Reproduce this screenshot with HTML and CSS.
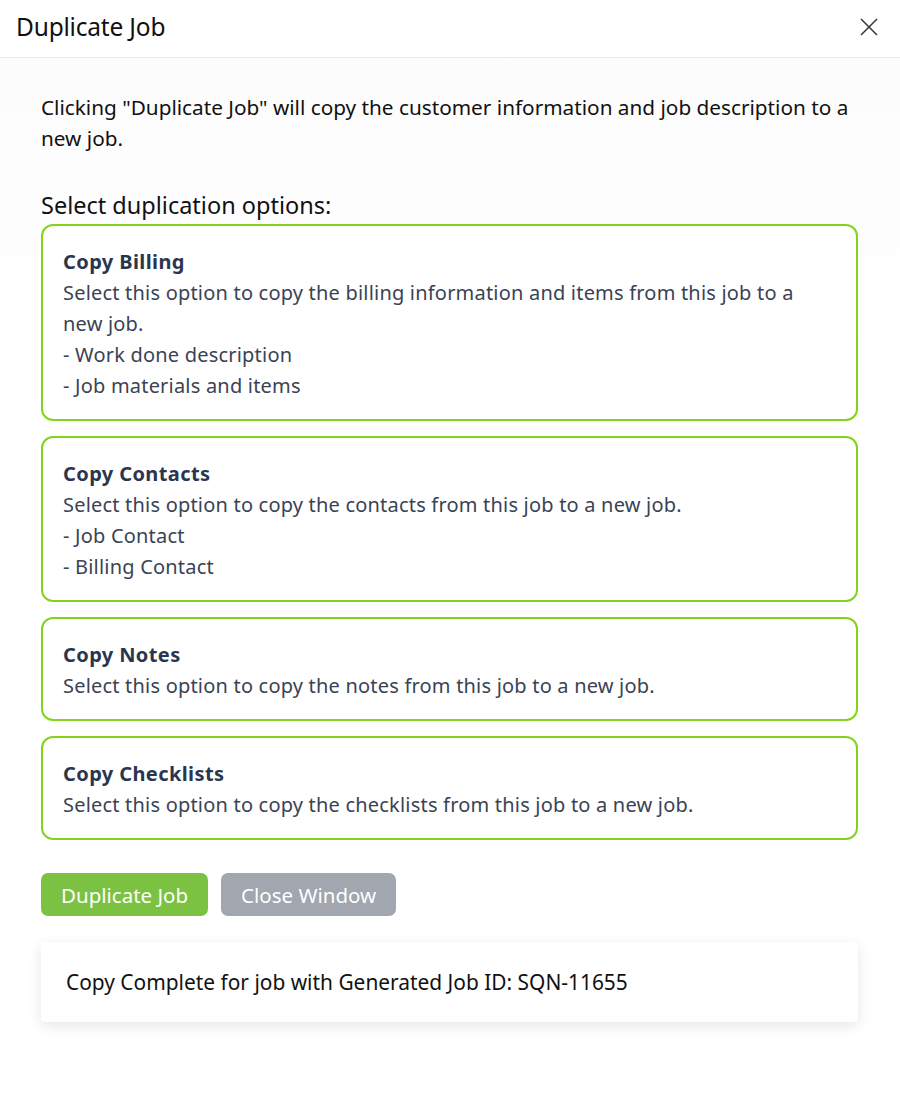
FILE: index.html
```html
<!DOCTYPE html>
<html lang="en">
<head>
    <title>Duplicate Job</title>
    <meta charset="UTF-8">
    <meta name="viewport" content="width=device-width, initial-scale=1.0">
    <link rel="stylesheet" href="styles.css">
</head>
<body>
    <div class="modal">
        <div class="modal-header">
            <h1>Duplicate Job</h1>
            <button class="close-btn" aria-label="Close">
                <svg viewBox="0 0 18 18" xmlns="http://www.w3.org/2000/svg">
                    <path d="M1 1L17 17M17 1L1 17"></path>
                </svg>
            </button>
        </div>

        <div class="modal-body">
            <p class="intro">Clicking "Duplicate Job" will copy the customer information and job description to a new job.</p>

            <div class="options-label">Select duplication options:</div>

            <div class="options">
                <div class="option-card">
                    <div class="option-title">Copy Billing</div>
                    <div class="option-text">Select this option to copy the billing information and items from this job to a new job.</div>
                    <div class="option-text">- Work done description</div>
                    <div class="option-text">- Job materials and items</div>
                </div>
                <div class="option-card">
                    <div class="option-title">Copy Contacts</div>
                    <div class="option-text">Select this option to copy the contacts from this job to a new job.</div>
                    <div class="option-text">- Job Contact</div>
                    <div class="option-text">- Billing Contact</div>
                </div>
                <div class="option-card">
                    <div class="option-title">Copy Notes</div>
                    <div class="option-text">Select this option to copy the notes from this job to a new job.</div>
                </div>
                <div class="option-card">
                    <div class="option-title">Copy Checklists</div>
                    <div class="option-text">Select this option to copy the checklists from this job to a new job.</div>
                </div>
            </div>

            <div class="actions">
                <button class="btn btn-primary">Duplicate Job</button>
                <button class="btn btn-secondary">Close Window</button>
            </div>

            <div class="result-box">Copy Complete for job with Generated Job ID: SQN-11655</div>
        </div>
    </div>
</body>
</html>
```

FILE: styles.css
```css
:root {
    --green: #7cc242;
    --card-border: #80d41c;
    --slate: #2a3650;
    --gray-btn: #a2a6ae;
}

* {
    margin: 0;
    padding: 0;
    box-sizing: border-box;
}

body {
    font-family: "Noto Sans", "Open Sans", sans-serif;
    background-color: #fff;
    color: #111;
    width: 900px;
    min-height: 1109px;
}

.modal-header {
    height: 58px;
    display: flex;
    align-items: center;
    justify-content: space-between;
    padding: 0 22px 4px 16px;
    border-bottom: 1px solid #ececec;
}

.modal-header h1 {
    font-size: 24.5px;
    font-weight: 400;
    letter-spacing: -0.2px;
    color: #111;
}

.close-btn {
    background: none;
    border: none;
    width: 18px;
    height: 18px;
    cursor: pointer;
}

.close-btn svg {
    width: 18px;
    height: 18px;
    stroke: #333;
    stroke-width: 1.5;
    fill: none;
}

.modal-body {
    padding: 34px 42px 80px 41px;
    background: linear-gradient(#fcfcfc, #fff 30%);
}

.intro {
    font-size: 20.75px;
    line-height: 31px;
}

.options-label {
    margin-top: 36px;
    margin-bottom: 4px;
    font-size: 23.5px;
    line-height: 30px;
}

.options {
    display: flex;
    flex-direction: column;
    gap: 15px;
}

.option-card {
    border: 2px solid var(--card-border);
    border-radius: 12px;
    padding: 20px 20px 18px;
    background: #fff;
    color: var(--slate);
}

.option-title {
    font-size: 20px;
    font-weight: 700;
    line-height: 31px;
    letter-spacing: 0.4px;
}

.option-text {
    font-size: 20px;
    line-height: 31px;
    color: #3a4354;
    letter-spacing: 0.2px;
}

.actions {
    display: flex;
    gap: 13px;
    margin-top: 33px;
}

.btn {
    font-family: "Noto Sans", sans-serif;
    font-size: 20.5px;
    color: #fff;
    border: none;
    border-radius: 7px;
    height: 43px;
    padding: 0 20px;
    cursor: pointer;
}

.btn-primary {
    background-color: var(--green);
}

.btn-secondary {
    background-color: var(--gray-btn);
}

.result-box {
    margin-top: 26px;
    padding: 26px 25px;
    font-size: 20.9px;
    line-height: 28px;
    background: #fff;
    border-radius: 4px;
    box-shadow: 0 4px 14px rgba(0, 0, 0, 0.1);
}
```
